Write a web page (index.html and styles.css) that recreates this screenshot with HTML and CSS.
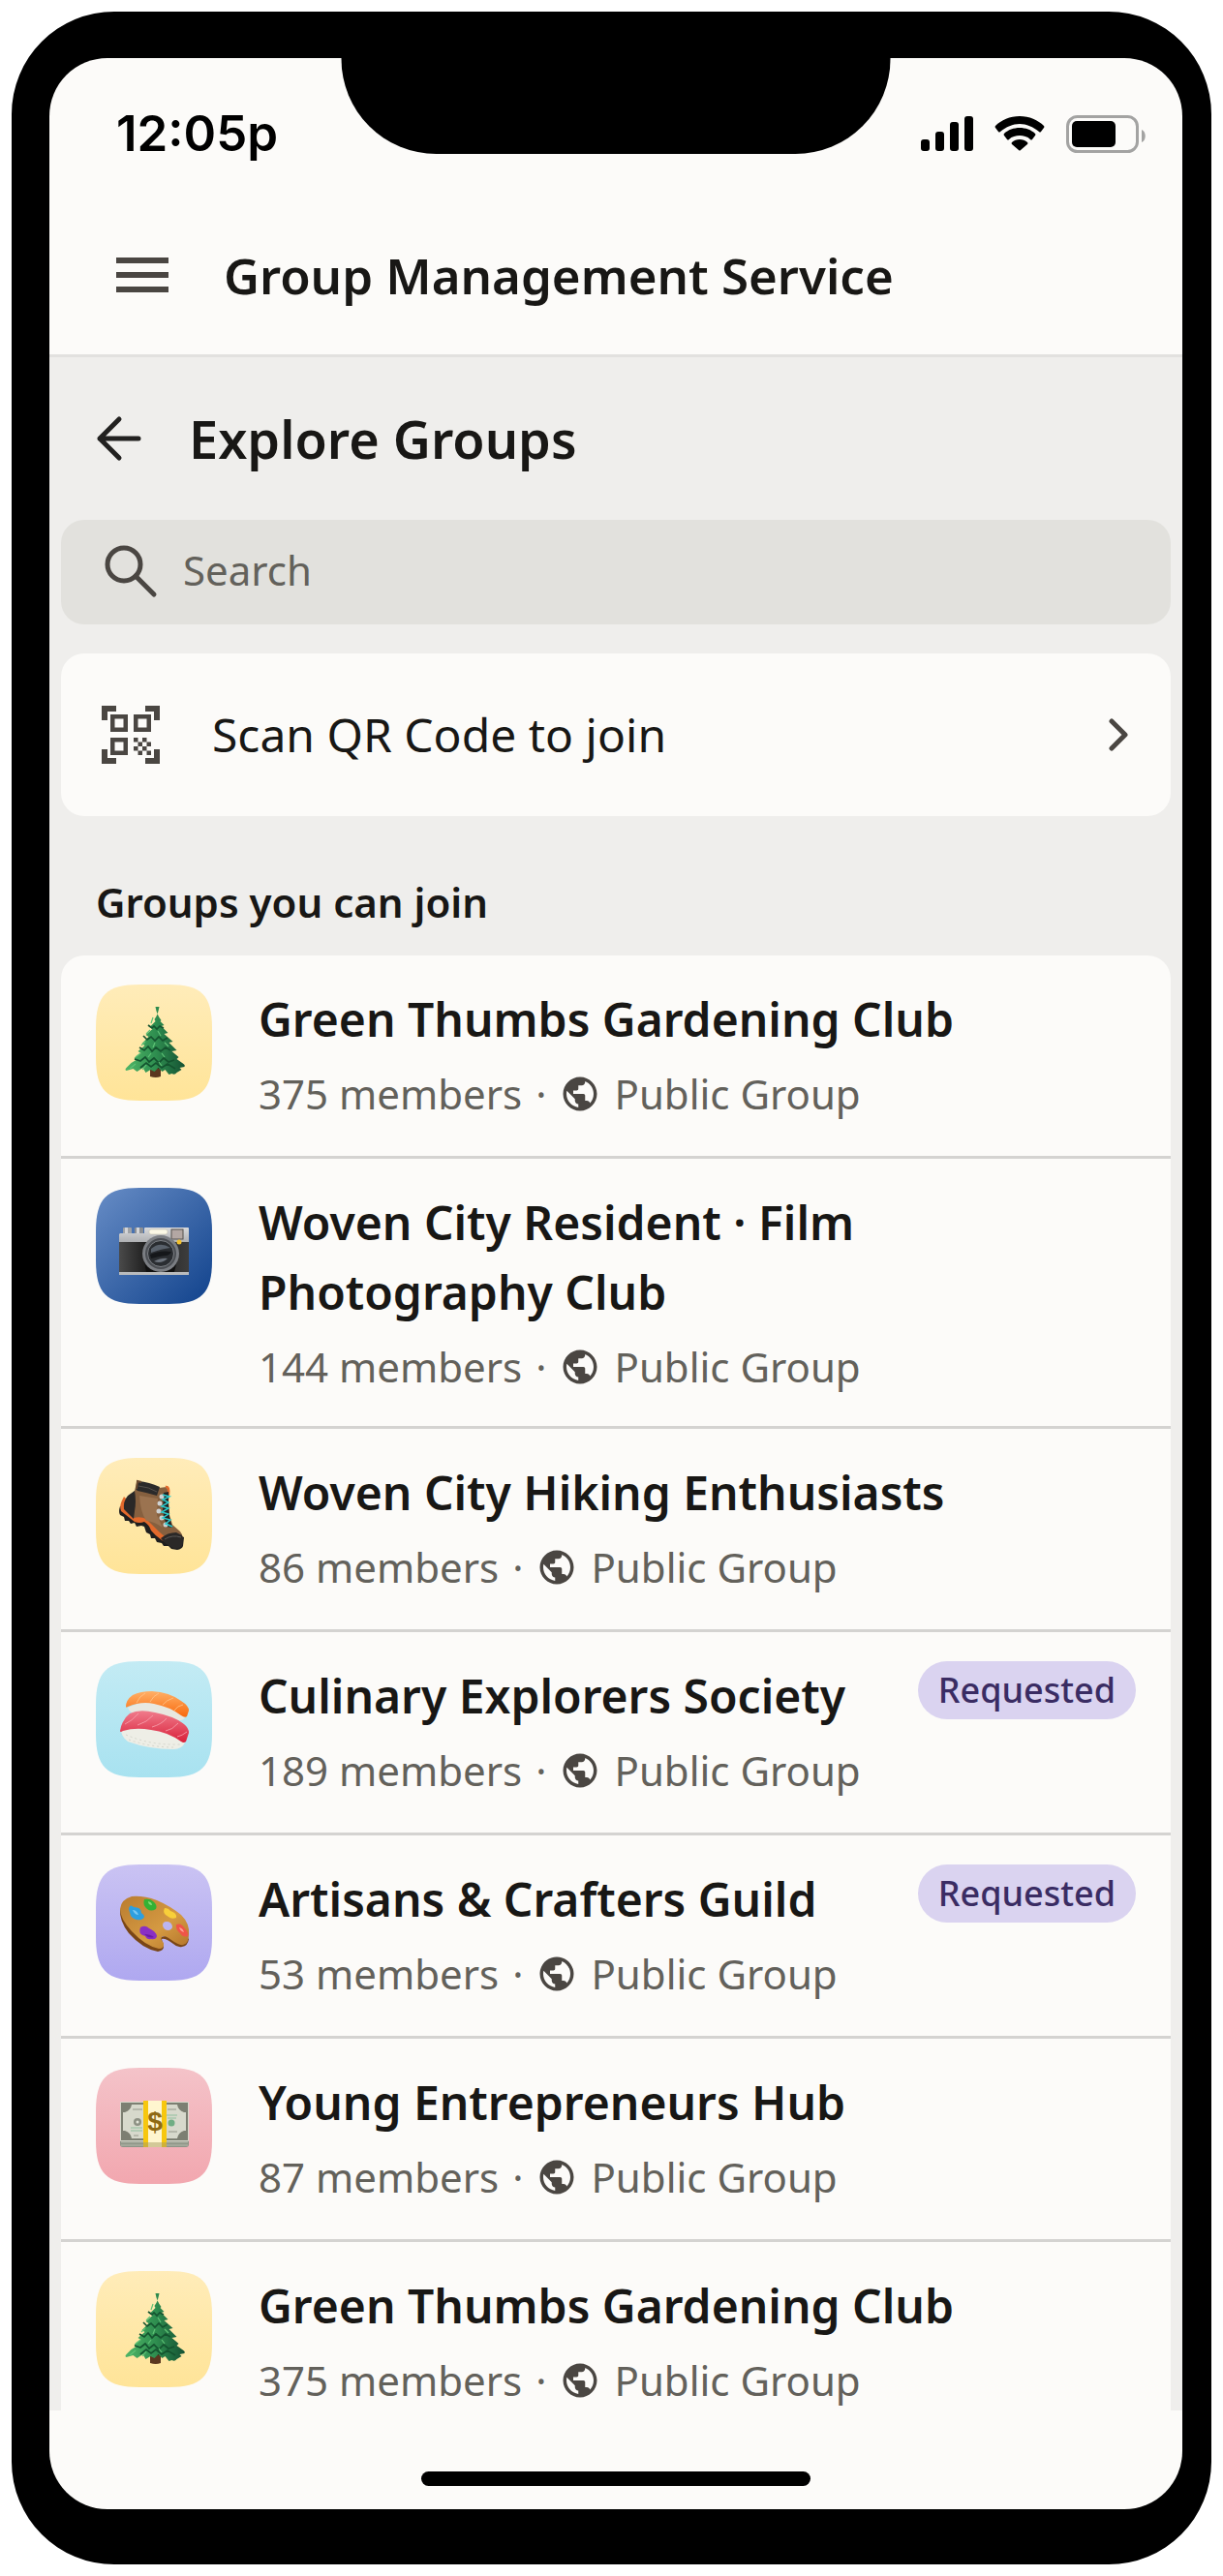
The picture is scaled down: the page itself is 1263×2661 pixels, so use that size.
FILE: index.html
```html
<!DOCTYPE html>
<html lang="en">

<head>
	<meta charset="utf-8">
	<title>Group Management Service</title>
	<link rel="stylesheet" href="styles.css">
</head>

<body>
	<!-- Shared drawings, used by the group rows -->
	<svg class="defs" aria-hidden="true">
		<defs>
			<linearGradient id="bgYellow" x2="0" y2="1">
				<stop offset="0" stop-color="#ffecb9" />
				<stop offset="1" stop-color="#ffe498" />
			</linearGradient>
			<linearGradient id="bgBlue" x2="1" y2="1">
				<stop offset="0.05" stop-color="#6389c3" />
				<stop offset="0.95" stop-color="#15468f" />
			</linearGradient>
			<linearGradient id="bgCyan" x2="0" y2="1">
				<stop offset="0" stop-color="#c3ebf4" />
				<stop offset="1" stop-color="#a8e2f0" />
			</linearGradient>
			<linearGradient id="bgPurple" x2="0" y2="1">
				<stop offset="0" stop-color="#cac3f3" />
				<stop offset="1" stop-color="#afa8f0" />
			</linearGradient>
			<linearGradient id="bgPink" x2="0" y2="1">
				<stop offset="0" stop-color="#f4c3c9" />
				<stop offset="1" stop-color="#f2a7af" />
			</linearGradient>
			<linearGradient id="treeGreen" x2="1" y2="0">
				<stop offset="0" stop-color="#4fb566" />
				<stop offset="0.5" stop-color="#2f8f50" />
				<stop offset="1" stop-color="#155233" />
			</linearGradient>
			<linearGradient id="metal" x2="0" y2="1">
				<stop offset="0" stop-color="#d9dadc" />
				<stop offset="1" stop-color="#a9abae" />
			</linearGradient>
			<linearGradient id="leather" x2="1" y2="0">
				<stop offset="0" stop-color="#4a4a4a" />
				<stop offset="0.4" stop-color="#1d1d1d" />
				<stop offset="1" stop-color="#3d3d3d" />
			</linearGradient>
			<linearGradient id="salmon" x2="0" y2="1">
				<stop offset="0" stop-color="#ffb067" />
				<stop offset="1" stop-color="#f9690c" />
			</linearGradient>
			<linearGradient id="tuna" x2="0" y2="1">
				<stop offset="0" stop-color="#f07c8c" />
				<stop offset="1" stop-color="#d9203a" />
			</linearGradient>
			<linearGradient id="wood" x2="1" y2="1">
				<stop offset="0" stop-color="#b97c30" />
				<stop offset="0.6" stop-color="#d59a42" />
				<stop offset="1" stop-color="#b3742a" />
			</linearGradient>

			<symbol id="squircle" viewBox="0 0 120 120">
				<path d="M0 45C0 11 11 0 45 0h30c34 0 45 11 45 45v30c0 34-11 45-45 45H45C11 120 0 109 0 75z" />
			</symbol>

			<symbol id="globe" viewBox="0 0 24 24">
				<path d="M12 2C6.48 2 2 6.48 2 12s4.48 10 10 10 10-4.48 10-10S17.52 2 12 2zm-1 17.93c-3.95-.49-7-3.85-7-7.93 0-.62.08-1.21.21-1.79L9 15v1c0 1.1.9 2 2 2v1.93zm6.9-2.54c-.26-.81-1-1.39-1.9-1.39h-1v-3c0-.55-.45-1-1-1H8v-2h2c.55 0 1-.45 1-1V7h2c1.1 0 2-.9 2-2v-.41c2.93 1.19 5 4.06 5 7.41 0 2.08-.8 3.97-2.1 5.39z" />
			</symbol>

			<symbol id="tree" viewBox="0 0 120 120">
				<path fill="#5b371f" d="M56 80h11v15q-5 2-11 0z" />
				<path fill="#2f1a0d" d="M56 80h11v7H56z" />
				<path fill="url(#treeGreen)" d="M61.500 23c1 6 3 10 6 14l-1 1 4 4-3 1 7 7-4 1 9 8-4 1 8 8-5 1 7 6-2 2 7 5q2 1 1 3l-5 1 2 2-5 3q-2 3-5 1l-3 1-4-5-3 2-4-4-4 4-4-2-5 3-3-5-6 4-4-3-7 2q-2-1 0-3l5-5 5-3-2-2 7-5-3-2 7-6-3-2 7-7-3-2 7-6-3-2 6-6-1-2c3-4 4-8 5-13z" />
				<path fill="none" stroke="#14532f" stroke-width="1.700" d="M54 42l4 3 2-2 3 3 3-3 4 2M49 53l4 4 4-3 4 4 4-4 4 4 5-3M45 65l5 3 4-4 4 5 4-4 5 4 5-4 5 3M40 77l6 2 5-4 4 5 5-4 5 5 5-5 5 4 6-2M46 86l6-5 5 4 5-4 6 5 6-4 8 5" />
				<path fill="none" stroke="#5fc276" stroke-width="1.200" d="M59 34l-2 6M56 47l-4 4M64 48l3 5M51 59l-4 4M61 60l-2 5M71 60l4 4M46 71l-5 4M57 71l-3 4M68 71l3 4M41 82l-6 5M52 83l-4 5M65 80l3 4" />
			</symbol>
		</defs>
	</svg>

	<div class="phone">
		<div class="notch"></div>

		<div class="status-bar">
			<span class="time">12:05p</span>
			<div class="status-icons">
				<svg width="54" height="36" viewBox="0 0 54 36" aria-hidden="true">
					<rect x="0" y="24" width="9" height="12" rx="3" />
					<rect x="15" y="16" width="9" height="20" rx="3" />
					<rect x="30" y="6" width="9" height="30" rx="3" />
					<rect x="45" y="0" width="9" height="36" rx="3" />
				</svg>
				<svg width="52" height="36" viewBox="0 0 52 36" aria-hidden="true">
					<path d="M26 0C36 0 45 4 51 10q1 1 0 2l-3 4q-1 1-2 0C40 11 33 8 26 8S12 11 6 16q-1 1-2 0l-3-4q-1-1 0-2C7 4 16 0 26 0z" />
					<path d="M26 12c6 0 12 2 16 6q1 1 0 2l-3 4q-1 1-2 0c-3-3-7-4-11-4s-8 1-11 4q-1 1-2 0l-3-4q-1-1 0-2c4-4 10-6 16-6z" />
					<path d="M26 24c3 0 6 1 8 3q1 1 0 2l-7 6q-1 1-2 0l-7-6q-1-1 0-2c2-2 5-3 8-3z" />
				</svg>
				<svg width="83" height="39" viewBox="0 0 83 39" aria-hidden="true">
					<rect x="1.500" y="1.500" width="72" height="36" rx="10" fill="none" stroke="#a3a3a2" stroke-width="3" />
					<rect x="6" y="6" width="45" height="27" rx="5" />
					<path fill="#a3a3a2" d="M78 15c5 2 5 11 0 13z" />
				</svg>
			</div>
		</div>

		<header class="app-bar">
			<button class="icon-button" type="button" aria-label="Menu">
				<svg width="72" height="72" viewBox="0 0 24 24" aria-hidden="true">
					<path fill="#4a4642" d="M3 6h18v2H3zM3 11h18v2H3zM3 16h18v2H3z" />
				</svg>
			</button>
			<h1>Group Management Service</h1>
		</header>

		<main class="content">
			<div class="page-title">
				<button class="icon-button" type="button" aria-label="Back">
					<svg width="72" height="72" viewBox="0 0 72 72" aria-hidden="true">
						<path class="line dark" d="M56 36H16M36 16L16 36l20 20" />
					</svg>
				</button>
				<h2>Explore Groups</h2>
			</div>

			<label class="search">
				<svg width="72" height="72" viewBox="0 0 72 72" aria-hidden="true">
					<circle class="line" cx="29" cy="30" r="17" />
					<path class="line" d="M41 42l19 19" />
				</svg>
				<input type="search" placeholder="Search" aria-label="Search">
			</label>

			<button class="scan" type="button">
				<svg width="72" height="72" viewBox="-6 -6 72 72" aria-hidden="true">
					<path fill="#4a4642" fill-rule="evenodd" d="M0 15V0h15v6H6v9zM45 0h15v15h-6V6h-9zM0 45h6v9h9v6H0zM54 45h6v15H45v-6h9zM9 9h18v18H9zM13.500 13.500v9h9v-9zM33 9h18v18H33zM37.500 13.500v9h9v-9zM9 33h18v18H9zM13.500 37.500v9h9v-9z" />
					<path fill="#4a4642" d="M33 33h4.500v4.500H33zM42 33h4.500v4.500H42zM37.500 37.500H42V42h-4.500zM46.500 37.500H51V42h-4.500zM33 42h4.500v4.500H33zM42 42h4.500v4.500H42zM37.500 46.500H42V51h-4.500zM46.500 46.500H51V51h-4.500z" />
				</svg>
				<span>Scan QR Code to join</span>
				<svg class="chevron" width="36" height="72" viewBox="0 0 36 72" aria-hidden="true">
					<path class="line" d="M11 22l14 14-14 14" />
				</svg>
			</button>

			<h3>Groups you can join</h3>

			<ul class="groups">
				<li>
					<a class="group" href="#">
						<svg class="avatar" viewBox="0 0 120 120" aria-hidden="true">
							<use href="#squircle" fill="url(#bgYellow)" />
							<use href="#tree" />
						</svg>
						<div class="info">
							<div class="name">Green Thumbs Gardening Club</div>
							<div class="meta"><span>375 members</span><span>·</span><svg class="globe"><use href="#globe" /></svg><span>Public Group</span></div>
						</div>
					</a>
				</li>
				<li>
					<a class="group" href="#">
						<svg class="avatar" viewBox="0 0 120 120" aria-hidden="true">
							<use href="#squircle" fill="url(#bgBlue)" />
							<rect x="28" y="41" width="9" height="8" rx="1" fill="#9fa2a6" />
							<rect x="40" y="41" width="9" height="8" rx="1" fill="#8d9094" />
							<path fill="#d4d5d7" d="M30 41h3v7h-3zM42 41h3v7h-3z" />
							<path fill="url(#metal)" d="M25 47h25v-5q0-1 1-1h44q1 0 1 1v16H24V48z" />
							<rect x="24" y="56" width="72" height="32" fill="url(#leather)" />
							<rect x="24" y="87" width="72" height="3" fill="#b9bbbd" />
							<rect x="55" y="43" width="19" height="5" rx="2" fill="#fbf8e6" stroke="#bdb9a6" stroke-width="0.500" />
							<rect x="78" y="43" width="12" height="10" fill="#b3a7a3" stroke="#55504d" />
							<circle cx="86" cy="56" r="2.500" fill="#f2c02e" />
							<path fill="#101010" d="M50 75h34l-3 12H52z" />
							<circle cx="67" cy="68" r="19" fill="#7b7e83" />
							<circle cx="67" cy="68" r="16" fill="#4c4f54" />
							<circle cx="67" cy="68" r="13.500" fill="#2a2d31" stroke="#8f9398" stroke-width="0.800" />
							<path fill="#59616b" d="M57 63q9-8 20-1-9 1-20 5z" />
							<path fill="#15171a" d="M56 69q10-5 22-3-2 4-6 4-8 1-15 3z" />
							<path fill="#6c737c" d="M60 76q8-4 14-3-6 6-14 3z" />
						</svg>
						<div class="info">
							<div class="name">Woven City Resident · Film Photography Club</div>
							<div class="meta"><span>144 members</span><span>·</span><svg class="globe"><use href="#globe" /></svg><span>Public Group</span></div>
						</div>
					</a>
				</li>
				<li>
					<a class="group" href="#">
						<svg class="avatar" viewBox="0 0 120 120" aria-hidden="true">
							<use href="#squircle" fill="url(#bgYellow)" />
							<path fill="#1f1e1e" d="M25 50q-2 6 0 9l4 2 1 4 4 0 2 3 4-1 2 4 5-1 3 1 2 6 4 2 1 4 4 0 2 4 5 1 2 3 5 0 3 3 6 1q5-1 6-4l1-9-10-5-40-28z" />
							<path fill="#e2692c" d="M27 44q-3 6-1 11l14 11q5 2 10 0 5 3 7 9 10 12 23 15l3-1-3-4-29-23-22-22z" />
							<path fill="#86603f" d="M40 34l2-8 23 5 8-1 3 5-1 10 1 14 3 10 8 7q5 6 0 11-12-1-22-11-8-8-13-13-6-3-13-1-6-5-9-11z" />
							<path fill="#9b7350" d="M45 39l19 3-1 17 6 13q-8-6-17-7-6-9-7-26z" />
							<path fill="#2a2827" d="M33 39l7-5q2 11 0 21l-1 8-10-10q-1-8 4-14z" />
							<path fill="#2b2a2a" d="M44 24q11 1 22 6l-3 9q-10-3-20-5l-2-2z" />
							<path fill="none" stroke="#55504c" d="M44 29q11 1 19 6" />
							<path fill="none" stroke="#6b4a30" stroke-width="2" d="M42 32l1-8 4 1" />
							<path fill="#2a2827" d="M67 83q7-6 16-6l6 3q2 5 0 11-4 4-9 2-8-3-13-10z" />
							<path fill="none" stroke="#5b5957" d="M71 84q8-5 17-2" />
							<path fill="none" stroke="#e2692c" stroke-width="2.500" d="M72 30q4-1 3 8" />
							<path fill="#242222" d="M70 36l5-1v12l1 14 3 11-6-1-4-16z" />
							<g fill="#cfd2d3">
								<circle cx="68" cy="40" r="2.500" />
								<circle cx="66" cy="47" r="2.500" />
								<circle cx="65" cy="55" r="2.500" />
								<circle cx="68" cy="62" r="2.500" />
								<circle cx="72" cy="69" r="2.500" />
							</g>
							<path fill="none" stroke="#2cc9cb" stroke-width="1.500" d="M69 38l7 2-7 3 6 3-7 4 7 2-7 4 7 2-6 4 8 2-5 4 7 3" />
						</svg>
						<div class="info">
							<div class="name">Woven City Hiking Enthusiasts</div>
							<div class="meta"><span>86 members</span><span>·</span><svg class="globe"><use href="#globe" /></svg><span>Public Group</span></div>
						</div>
					</a>
				</li>
				<li>
					<a class="group" href="#">
						<svg class="avatar" viewBox="0 0 120 120" aria-hidden="true">
							<use href="#squircle" fill="url(#bgCyan)" />
							<path fill="#e8e8e0" d="M33 48q2 7 12 7l40 6q7 1 8-6l-5-8-38-6z" />
							<path fill="url(#salmon)" d="M31 47q0-7 7-12 8-4 20-4 18 1 30 10 8 5 8 10l-2 6q-2 2-6-1-12-9-28-12-13-3-27 3-2 1-2 0z" />
							<path fill="none" stroke="#ffc58b" stroke-width="0.800" d="M42 43q3-7 9-10M56 42q3-6 9-9M69 45q4-5 11-7M81 51q3-5 9-6" />
							<path fill="#eeeee6" d="M26 70q0 8 7 13 22 8 47 8 9 0 12-7l-8-9-40-8z" />
							<path fill="none" stroke="#d4d5cb" stroke-dasharray="2 3" d="M31 76q25 11 56 10M34 81q22 8 47 8" />
							<path fill="url(#tuna)" d="M25 72q2-12 10-18 10-5 26-1 20 4 30 12 5 4 5 9l-3 9q-2 2-5 0-14-10-31-12-16-3-29 1-3 2-3 0z" />
							<path fill="none" stroke="#f6a3ae" stroke-width="0.800" d="M30 65q7-3 14-11M43 66q10-3 16-10M58 68q10-3 15-9M72 72q7-1 13-8M84 78q5-1 10-5" />
						</svg>
						<div class="info">
							<div class="name">Culinary Explorers Society</div>
							<div class="meta"><span>189 members</span><span>·</span><svg class="globe"><use href="#globe" /></svg><span>Public Group</span></div>
						</div>
						<span class="badge">Requested</span>
					</a>
				</li>
				<li>
					<a class="group" href="#">
						<svg class="avatar" viewBox="0 0 120 120" aria-hidden="true">
							<use href="#squircle" fill="url(#bgPurple)" />
							<path fill="#7a4616" d="M25 46q-1 12 9 25 14 16 30 19 6-1 6-5l-2-8q4-1 12 5 4 4 9 3 6-1 7-8l-6-6-30 5z" />
							<path fill="url(#wood)" d="M25 46q1-10 12-13 12-1 26 4 14 6 25 15 9 9 8 20 0 10-6 11-4 1-12-5-8-6-10-3-2 2 2 6 1 6-5 6-14-3-28-18-12-13-12-23zM69 63q1 5 6 5 4-1 4-4-1-5-6-5-4 0-4 4z" />
							<path fill="#2d9fe0" d="M34 46q1-6 5-2 8 0 8 6 6 4 0 7-8 1-11-4z" />
							<path fill="#7cc8f2" d="M38 47q4 0 6 5-4 0-6-5z" />
							<path fill="#33b234" d="M50 36q6-1 9 2 5 4 3 8-5 3-9 0-5-4-3-10z" />
							<path fill="#82dc76" d="M54 38q4 1 4 4-4 0-4-4z" />
							<path fill="#f8cf3a" d="M71 45q4 0 6 3 7 2 6 7-5 2-8-1-7-3-4-9z" />
							<path fill="#ef5548" d="M83 62q5-2 8 3 5 5 4 9-5 2-8-3-5-4-4-9z" />
							<path fill="#ffa095" d="M86 65q4 1 5 5-4-1-5-5z" />
							<path fill="#8a2fc4" d="M46 65q5-3 9 1 7 3 8 8-1 4-6 3-4 1-6-3-8-2-5-9z" />
							<path fill="#6a1ba2" d="M50 72q6 0 10 3-5 2-10-3z" />
						</svg>
						<div class="info">
							<div class="name">Artisans &amp; Crafters Guild</div>
							<div class="meta"><span>53 members</span><span>·</span><svg class="globe"><use href="#globe" /></svg><span>Public Group</span></div>
						</div>
						<span class="badge">Requested</span>
					</a>
				</li>
				<li>
					<a class="group" href="#">
						<svg class="avatar" viewBox="0 0 120 120" aria-hidden="true">
							<use href="#squircle" fill="url(#bgPink)" />
							<path fill="#8d9486" d="M25 74h71v5q0 3-3 3H28q-3 0-3-3z" />
							<path fill="none" stroke="#b9beb0" d="M26 77h69M26 80h69" />
							<rect x="25" y="35" width="71" height="41" rx="1" fill="#d7d9cc" />
							<rect x="27" y="37" width="67" height="37" fill="none" stroke="#7c7f72" stroke-width="2" />
							<path fill="#7c7f72" d="M28 38h9q-1 6-7 8h-2zM93 38h-9q1 6 7 8h2zM28 73h9q-1-6-7-8h-2zM93 73h-9q1-6 7-8h2z" />
							<path fill="none" stroke="#94978a" d="M38 43h10M74 43h9M75 66h9M39 70h5" />
							<path fill="none" stroke="#8fbf9d" d="M36 62h12M36 65h12M73 49h11M74 52h9" />
							<circle cx="43" cy="56" r="4" fill="#8d9184" />
							<circle cx="43" cy="56" r="1.500" fill="#e4e6da" />
							<circle cx="78" cy="57" r="3.500" fill="#6fae84" />
							<path fill="#f7c70f" d="M49 34h24v48H49z" />
							<path fill="#fff6cf" d="M54 34h14v48H54z" />
							<path fill="#a89b62" fill-opacity="0.500" d="M49 77h24v5H49z" />
							<text class="dollar" x="61" y="65">$</text>
						</svg>
						<div class="info">
							<div class="name">Young Entrepreneurs Hub</div>
							<div class="meta"><span>87 members</span><span>·</span><svg class="globe"><use href="#globe" /></svg><span>Public Group</span></div>
						</div>
					</a>
				</li>
				<li>
					<a class="group" href="#">
						<svg class="avatar" viewBox="0 0 120 120" aria-hidden="true">
							<use href="#squircle" fill="url(#bgYellow)" />
							<use href="#tree" />
						</svg>
						<div class="info">
							<div class="name">Green Thumbs Gardening Club</div>
							<div class="meta"><span>375 members</span><span>·</span><svg class="globe"><use href="#globe" /></svg><span>Public Group</span></div>
						</div>
					</a>
				</li>
			</ul>
		</main>

		<footer class="home-bar">
			<div class="home-indicator"></div>
		</footer>
	</div>
</body>

</html>
```
FILE: styles.css
```css
* {
	box-sizing: border-box;
}

body {
	margin: 0;
	padding: 12px;
	background-color: #fff;
	color: #181715;
	font-family: "Noto Sans", "Open Sans", sans-serif;
	font-size: 48px;
	line-height: 72px;
}

h1,
h2,
h3,
ul {
	margin: 0;
	padding: 0;
}

button {
	padding: 0;
	border: 0;
	background: none;
	color: inherit;
	font: inherit;
}

svg {
	display: block;
	flex: none;
}

.defs {
	position: absolute;
	width: 0;
	height: 0;
}

.line {
	fill: none;
	stroke: #4a4642;
	stroke-width: 5;
	stroke-linecap: round;
	stroke-linejoin: round;
}

.dark {
	stroke: #222120;
}

/* black frame around the screen */
.phone {
	position: relative;
	display: flex;
	flex-direction: column;
	height: calc(100vh - 24px);
	border: solid #000;
	border-width: 48px 30px 57px 39px;
	border-radius: 106px;
	background-color: #000;
}

.notch {
	position: absolute;
	top: 0;
	left: 50%;
	width: 567px;
	height: 99px;
	transform: translateX(-50%);
	border-radius: 0 0 98px 98px;
	background-color: #000;
}

.status-bar {
	display: flex;
	flex: none;
	align-items: center;
	justify-content: space-between;
	height: 141px;
	padding: 15px 37px 0 69px;
	border-radius: 60px 60px 0 0;
	background-color: #fcfbf9;
	color: #000;
}

.time {
	font-family: Inter, sans-serif;
	font-size: 51px;
	font-weight: 600;
}

.status-icons {
	display: flex;
	align-items: center;
	gap: 22px;
}

.app-bar {
	display: flex;
	flex: none;
	align-items: center;
	gap: 48px;
	height: 168px;
	padding: 0 60px;
	border-bottom: 3px solid #e2e1df;
	background-color: #fcfbf9;
}

h1 {
	font-size: 51px;
	font-weight: 600;
}

h2 {
	font-size: 54px;
	font-weight: 600;
}

/* everything that scrolls */
.content {
	flex: 1;
	min-height: 0;
	padding: 0 12px;
	overflow: hidden;
	background-color: #efeeec;
}

.page-title {
	display: flex;
	align-items: center;
	gap: 36px;
	height: 168px;
	padding: 0 24px;
}

.search {
	display: flex;
	align-items: center;
	gap: 18px;
	height: 108px;
	padding: 0 36px 4px;
	border-radius: 24px;
	background-color: #e2e1dd;
}

.search input {
	flex: 1;
	min-width: 0;
	padding: 0;
	border: 0;
	outline: none;
	background: none;
	font: inherit;
	font-size: 42px;
}

.search input::placeholder {
	color: #63615b;
	opacity: 1;
}

.scan {
	display: flex;
	align-items: center;
	gap: 48px;
	width: 100%;
	height: 168px;
	margin-top: 30px;
	padding: 0 36px;
	border-radius: 24px;
	background-color: #fcfbf9;
}

.chevron {
	margin-left: auto;
}

h3 {
	padding: 57px 36px 24px;
	font-size: 42px;
	font-weight: 600;
	line-height: 63px;
}

.groups {
	list-style: none;
	border-radius: 24px 24px 0 0;
	background-color: #fcfbf9;
}

.groups li + li {
	border-top: 3px solid #d4d3d1;
}

.group {
	display: flex;
	align-items: flex-start;
	min-height: 207px;
	padding: 30px 36px;
	color: inherit;
	text-decoration: none;
}

.avatar {
	width: 120px;
	height: 120px;
	margin-right: 48px;
}

.info {
	flex: 1;
	max-width: 750px;
}

.name {
	font-weight: 600;
}

.meta {
	display: flex;
	align-items: center;
	gap: 14px;
	margin-top: 9px;
	color: #63615b;
	font-size: 42px;
	line-height: 63px;
}

.globe {
	width: 42px;
	height: 42px;
	fill: #4a4642;
}

.badge {
	padding: 0 21px;
	border-radius: 30px;
	background-color: #dad3f0;
	color: #3a2c63;
	font-size: 36px;
	font-weight: 500;
	line-height: 60px;
}

.dollar {
	fill: #8f6a14;
	font-family: "Liberation Sans", sans-serif;
	font-size: 28px;
	font-weight: 700;
	text-anchor: middle;
}

.home-bar {
	display: flex;
	flex: none;
	align-items: center;
	justify-content: center;
	height: 102px;
	padding-top: 39px;
	border-radius: 0 0 60px 60px;
	background-color: #fcfbf9;
}

.home-indicator {
	width: 402px;
	height: 15px;
	border-radius: 8px;
	background-color: #000;
}
```
